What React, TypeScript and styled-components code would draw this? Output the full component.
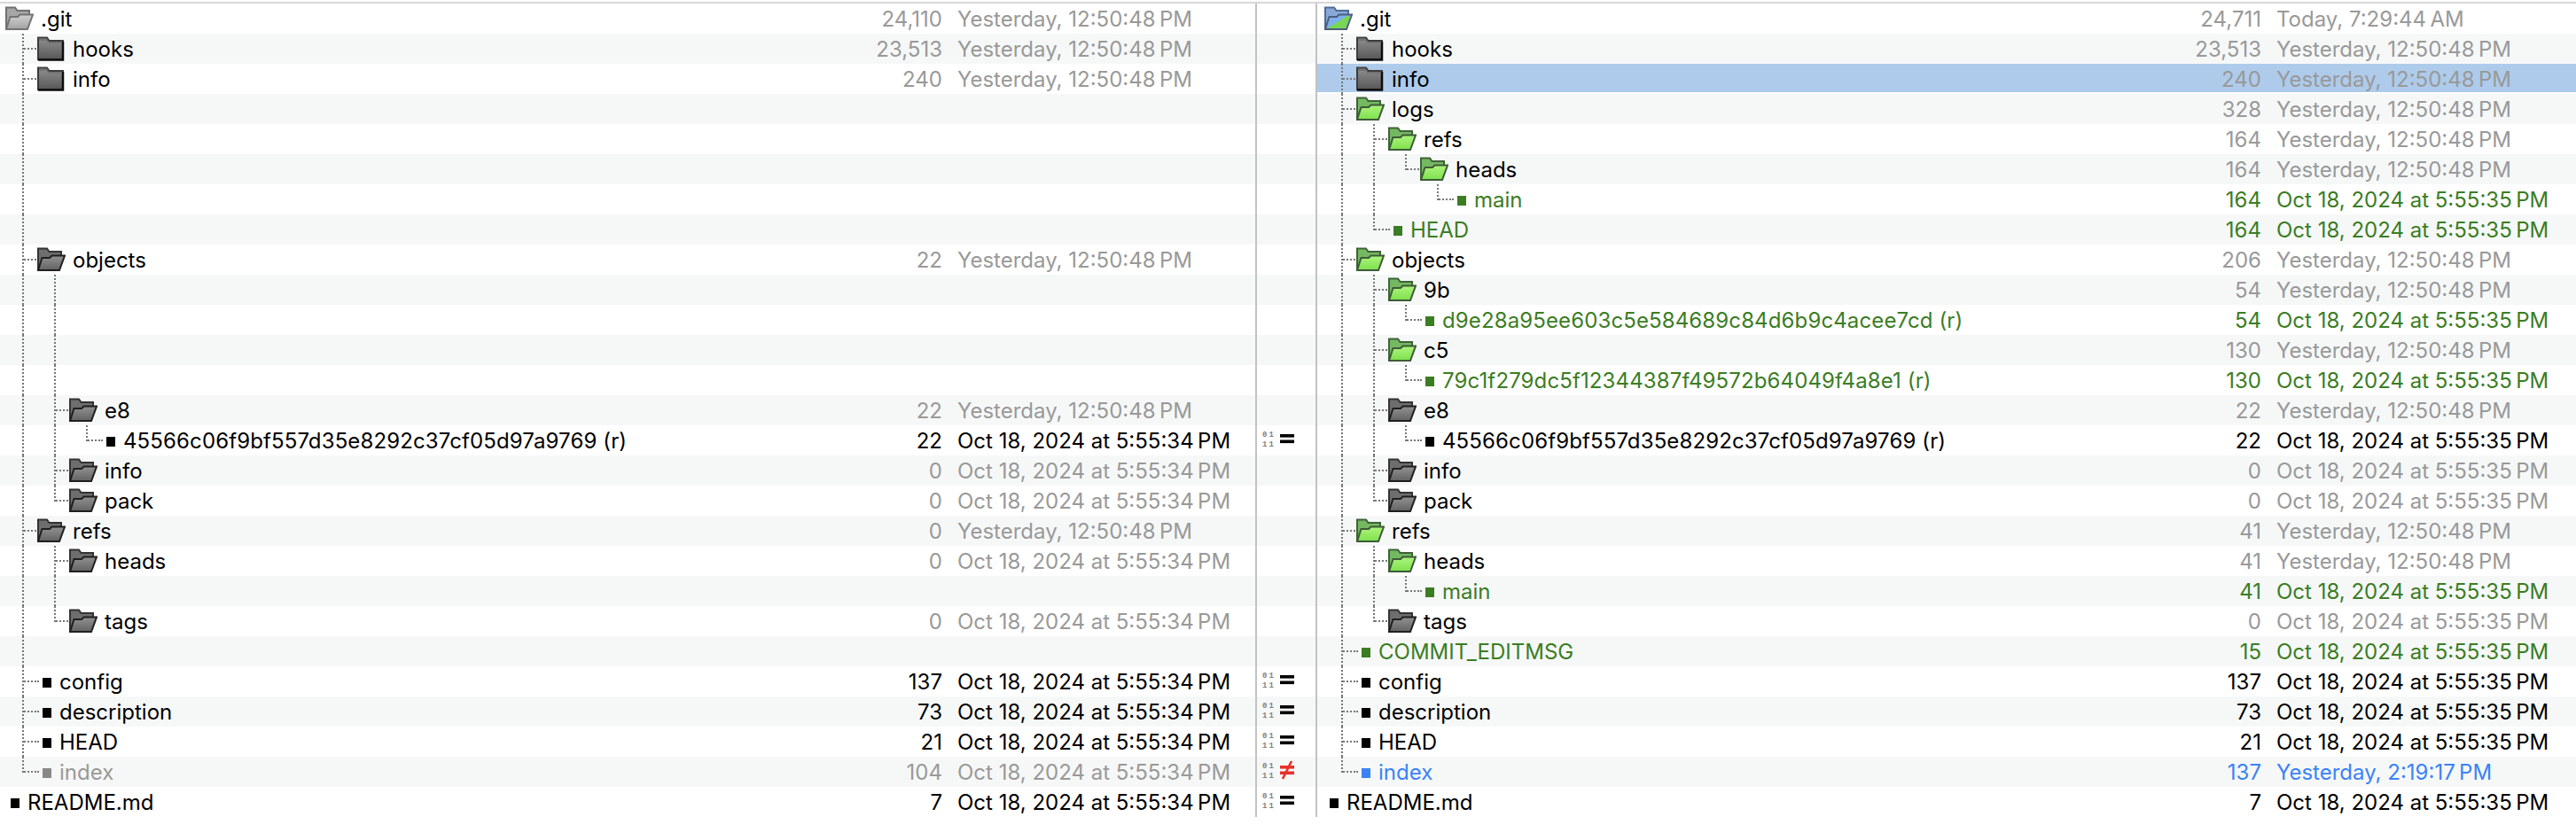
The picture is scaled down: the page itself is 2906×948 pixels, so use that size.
import React from "react";
import styled, { createGlobalStyle, css } from "styled-components";

const Global = createGlobalStyle`
  html, body { margin: 0; padding: 0; background: #fff; }
  body { font-family: Inter, "Liberation Sans", sans-serif; }
`;

type Tone = "black" | "gray" | "green" | "blue";
type Icon = "closed" | "open" | "openLight" | "openGreen" | "openSplit" | "file" | "none";
const toneColor: Record<Tone, string> = { black: "#000", gray: "#999", green: "#3b7d23", blue: "#3b82f6" };

interface Side {
  g: string;
  icon: Icon;
  name?: string;
  size?: string;
  date?: string;
  nameTone?: Tone;
  tone?: Tone;
  selected?: boolean;
}

const Y = "Yesterday, 12:50:48\u2009PM";
const L = "Oct 18, 2024 at 5:55:34\u2009PM";
const R = "Oct 18, 2024 at 5:55:35\u2009PM";
const HASH_E8 = "45566c06f9bf557d35e8292c37cf05d97a9769 (r)";

const leftRows: Side[] = [
  { g: "", icon: "openLight", name: ".git", size: "24,110", date: Y, tone: "gray" },
  { g: "T", icon: "closed", name: "hooks", size: "23,513", date: Y, tone: "gray" },
  { g: "T", icon: "closed", name: "info", size: "240", date: Y, tone: "gray" },
  { g: "|", icon: "none" }, { g: "|", icon: "none" }, { g: "|", icon: "none" }, { g: "|", icon: "none" }, { g: "|", icon: "none" },
  { g: "T", icon: "open", name: "objects", size: "22", date: Y, tone: "gray" },
  { g: "||", icon: "none" }, { g: "||", icon: "none" }, { g: "||", icon: "none" }, { g: "||", icon: "none" },
  { g: "|T", icon: "open", name: "e8", size: "22", date: Y, tone: "gray" },
  { g: "||L", icon: "file", name: HASH_E8, size: "22", date: L, tone: "black" },
  { g: "|T", icon: "open", name: "info", size: "0", date: L, tone: "gray" },
  { g: "|L", icon: "open", name: "pack", size: "0", date: L, tone: "gray" },
  { g: "T", icon: "open", name: "refs", size: "0", date: Y, tone: "gray" },
  { g: "|T", icon: "open", name: "heads", size: "0", date: L, tone: "gray" },
  { g: "||", icon: "none" },
  { g: "|L", icon: "open", name: "tags", size: "0", date: L, tone: "gray" },
  { g: "|", icon: "none" },
  { g: "T", icon: "file", name: "config", size: "137", date: L, tone: "black" },
  { g: "T", icon: "file", name: "description", size: "73", date: L, tone: "black" },
  { g: "T", icon: "file", name: "HEAD", size: "21", date: L, tone: "black" },
  { g: "L", icon: "file", name: "index", size: "104", date: L, tone: "gray", nameTone: "gray" },
  { g: "", icon: "file", name: "README.md", size: "7", date: L, tone: "black" },
];

const rightRows: Side[] = [
  { g: "", icon: "openSplit", name: ".git", size: "24,711", date: "Today, 7:29:44\u2009AM", tone: "gray" },
  { g: "T", icon: "closed", name: "hooks", size: "23,513", date: Y, tone: "gray" },
  { g: "T", icon: "closed", name: "info", size: "240", date: Y, tone: "gray", selected: true },
  { g: "T", icon: "openGreen", name: "logs", size: "328", date: Y, tone: "gray" },
  { g: "|T", icon: "openGreen", name: "refs", size: "164", date: Y, tone: "gray" },
  { g: "||L", icon: "openGreen", name: "heads", size: "164", date: Y, tone: "gray" },
  { g: "|| L", icon: "file", name: "main", size: "164", date: R, tone: "green", nameTone: "green" },
  { g: "|L", icon: "file", name: "HEAD", size: "164", date: R, tone: "green", nameTone: "green" },
  { g: "T", icon: "openGreen", name: "objects", size: "206", date: Y, tone: "gray" },
  { g: "|T", icon: "openGreen", name: "9b", size: "54", date: Y, tone: "gray" },
  { g: "||L", icon: "file", name: "d9e28a95ee603c5e584689c84d6b9c4acee7cd (r)", size: "54", date: R, tone: "green", nameTone: "green" },
  { g: "|T", icon: "openGreen", name: "c5", size: "130", date: Y, tone: "gray" },
  { g: "||L", icon: "file", name: "79c1f279dc5f12344387f49572b64049f4a8e1 (r)", size: "130", date: R, tone: "green", nameTone: "green" },
  { g: "|T", icon: "open", name: "e8", size: "22", date: Y, tone: "gray" },
  { g: "||L", icon: "file", name: HASH_E8, size: "22", date: R, tone: "black" },
  { g: "|T", icon: "open", name: "info", size: "0", date: R, tone: "gray" },
  { g: "|L", icon: "open", name: "pack", size: "0", date: R, tone: "gray" },
  { g: "T", icon: "openGreen", name: "refs", size: "41", date: Y, tone: "gray" },
  { g: "|T", icon: "openGreen", name: "heads", size: "41", date: Y, tone: "gray" },
  { g: "||L", icon: "file", name: "main", size: "41", date: R, tone: "green", nameTone: "green" },
  { g: "|L", icon: "open", name: "tags", size: "0", date: R, tone: "gray" },
  { g: "T", icon: "file", name: "COMMIT_EDITMSG", size: "15", date: R, tone: "green", nameTone: "green" },
  { g: "T", icon: "file", name: "config", size: "137", date: R, tone: "black" },
  { g: "T", icon: "file", name: "description", size: "73", date: R, tone: "black" },
  { g: "T", icon: "file", name: "HEAD", size: "21", date: R, tone: "black" },
  { g: "L", icon: "file", name: "index", size: "137", date: "Yesterday, 2:19:17\u2009PM", tone: "blue", nameTone: "blue" },
  { g: "", icon: "file", name: "README.md", size: "7", date: R, tone: "black" },
];

const compare: Record<number, "eq" | "ne"> = { 14: "eq", 22: "eq", 23: "eq", 24: "eq", 25: "ne", 26: "eq" };

const Page = styled.div`
  width: 2906px;
  padding-top: 2px;
  font-size: 24px;
  color: #000;
`;
const TopRule = styled.div`
  height: 2px;
  background: #d8d8d8;
`;
const Row = styled.div<{ $striped: boolean }>`
  display: grid;
  grid-template-columns: 1416px 70px 1420px;
  height: 34px;
  background: ${(p) => (p.$striped ? "#f6f8f8" : "#fff")};
`;
const Pane = styled.div<{ $inset: number; $selected?: boolean }>`
  display: grid;
  grid-template-columns: 930px 127px 17px auto;
  grid-template-rows: 34px;
  padding-left: ${(p) => p.$inset}px;
  height: 34px;
  overflow: hidden;
  ${(p) => p.$selected && css`background: linear-gradient(#aecbeb 0 32px, transparent 32px);`}
`;
const Tree = styled.div`
  display: flex;
  align-items: flex-start;
  min-width: 0;
`;
const dotsV = "repeating-linear-gradient(to bottom, #777 0 2px, transparent 2px 4px)";
const dotsH = "repeating-linear-gradient(to right, #777 0 2px, transparent 2px 4px)";
const Guide = styled.span<{ $kind: string }>`
  flex: none;
  width: 36px;
  height: 34px;
  background-repeat: no-repeat;
  ${(p) => p.$kind === "|" && css`
    background-image: ${dotsV};
    background-size: 2px 34px;
    background-position: 19px 0;
  `}
  ${(p) => p.$kind === "T" && css`
    background-image: ${dotsV}, ${dotsH};
    background-size: 2px 34px, 15px 2px;
    background-position: 19px 0, 21px 16px;
  `}
  ${(p) => p.$kind === "L" && css`
    background-image: ${dotsV}, ${dotsH};
    background-size: 2px 18px, 15px 2px;
    background-position: 19px 0, 21px 16px;
  `}
`;
const FolderSlot = styled.svg`
  flex: none;
  width: 32px;
  height: 28px;
  margin: 3px 8px 3px 0;
`;
const FileSlot = styled.span<{ $linked: boolean }>`
  flex: none;
  display: flex;
  align-items: center;
  width: 25px;
  height: 34px;
  padding-left: 6px;
  box-sizing: border-box;
  background: ${(p) => (p.$linked ? `${dotsH} 0 16px / 4px 2px no-repeat` : "none")};
`;
const FileMark = styled.span<{ $tone: Tone }>`
  width: 10px;
  height: 11px;
  margin-top: 2px;
  background: ${(p) => (p.$tone === "gray" ? "#888" : toneColor[p.$tone])};
`;
const Name = styled.span<{ $tone: Tone; $hash: boolean }>`
  line-height: 36px;
  white-space: nowrap;
  letter-spacing: ${(p) => (p.$hash ? "0.12px" : "0")};
  color: ${(p) => toneColor[p.$tone]};
`;
const Size = styled.span<{ $tone: Tone }>`
  grid-column: 2;
  text-align: right;
  line-height: 36px;
  color: ${(p) => toneColor[p.$tone]};
`;
const DateText = styled.span<{ $tone: Tone }>`
  grid-column: 4;
  line-height: 36px;
  white-space: nowrap;
  color: ${(p) => toneColor[p.$tone]};
`;
const Gutter = styled.div`
  display: flex;
  align-items: flex-start;
  gap: 7px;
  box-sizing: border-box;
  padding-left: 6px;
  border-left: 2px solid #c2c2c2;
  border-right: 2px solid #c2c2c2;
`;
const Bits = styled.span`
  display: block;
  width: 13px;
  padding-top: 6px;
  font: bold 9px/10.5px "Liberation Mono", monospace;
  letter-spacing: 2px;
  color: #808080;
  white-space: pre;
`;
const Verdict = styled.svg`
  width: 18px;
  height: 34px;
`;

function Folder({ icon, id }: { icon: Icon; id: string }) {
  if (icon === "closed") {
    return (
      <FolderSlot viewBox="0 0 32 28">
        <defs>
          <linearGradient id={id} x1="0" y1="0" x2="0" y2="1">
            <stop offset="0" stopColor="#909090" />
            <stop offset="1" stopColor="#575757" />
          </linearGradient>
        </defs>
        <path d="M1 1.5h10l2.5 3.5H29V26H1z" fill={`url(#${id})`} stroke="#3c3c3c" strokeWidth="2" strokeLinejoin="miter" />
        <path d="M1 26.5h28V6" fill="none" stroke="#0c0c0c" strokeWidth="2.5" />
        <path d="M2 4h9l2 3h15" fill="none" stroke="#6e6e6e" strokeWidth="1.5" />
      </FolderSlot>
    );
  }
  const palette =
    icon === "openGreen"
      ? { back: "#74b862", line: "#3f6238", topF: "#aef57e", botF: "#7de04c", edge: "#3e5a38" }
      : icon === "openLight"
        ? { back: "#a6a6a6", line: "#707070", topF: "#d2d2d2", botF: "#a2a2a2", edge: "#747474" }
        : icon === "openSplit"
          ? { back: "#88a9d8", line: "#4f6a94", topF: "#7fb0ee", botF: "#7fb0ee", edge: "#4c5f7a" }
          : { back: "#6e6e6e", line: "#333", topF: "#929292", botF: "#626262", edge: "#1f1f1f" };
  return (
    <FolderSlot viewBox="0 0 32 28">
      <defs>
        <linearGradient id={id} x1="0" y1="0" x2="0" y2="1">
          <stop offset="0" stopColor={palette.topF} />
          <stop offset="1" stopColor={palette.botF} />
        </linearGradient>
      </defs>
      <path d="M1 26V1.5h10l2.5 3.5H27v6" fill={palette.back} stroke={palette.line} strokeWidth="2" />
      <path d="M1 26L5.5 12H14l2.5-2.5H31L25 26z" fill={`url(#${id})`} stroke={palette.edge} strokeWidth="2" strokeLinejoin="miter" />
      {icon === "openSplit" && <path d="M3 25L26 11h3.5L24 25z" fill="#79d653" />}
    </FolderSlot>
  );
}

function PaneCell({ side, inset, id }: { side: Side; inset: number; id: string }) {
  const tone = side.tone ?? "black";
  return (
    <Pane $inset={inset} $selected={side.selected}>
      <Tree>
        {side.g.split("").map((k, i) => (
          <Guide key={i} $kind={k} />
        ))}
        {side.icon === "file" && (
          <FileSlot $linked={side.g.length > 0}>
            <FileMark $tone={side.nameTone ?? "black"} />
          </FileSlot>
        )}
        {side.icon !== "file" && side.icon !== "none" && <Folder icon={side.icon} id={id} />}
        {side.name && (
          <Name $tone={side.nameTone ?? "black"} $hash={side.name.endsWith("(r)")}>
            {side.name}
          </Name>
        )}
      </Tree>
      {side.size && <Size $tone={tone}>{side.size}</Size>}
      {side.date && <DateText $tone={tone}>{side.date}</DateText>}
    </Pane>
  );
}

function CompareMark({ kind }: { kind?: "eq" | "ne" }) {
  if (!kind) return null;
  const color = kind === "ne" ? "#e8302a" : "#000";
  return (
    <>
      <Bits>{"01\n11"}</Bits>
      <Verdict viewBox="0 0 18 34">
        <rect x="0" y="10" width="16" height="3.6" fill={color} />
        <rect x="0" y="16.5" width="16" height="3.6" fill={color} />
        {kind === "ne" && <path d="M3 25L13 5" stroke={color} strokeWidth="2.6" />}
      </Verdict>
    </>
  );
}

export default function App() {
  return (
    <Page>
      <Global />
      <TopRule />
      {leftRows.map((l, i) => (
        <Row key={i} $striped={i % 2 === 1}>
          <PaneCell side={l} inset={6} id={`l${i}`} />
          <Gutter>
            <CompareMark kind={compare[i]} />
          </Gutter>
          <PaneCell side={rightRows[i]} inset={8} id={`r${i}`} />
        </Row>
      ))}
    </Page>
  );
}
